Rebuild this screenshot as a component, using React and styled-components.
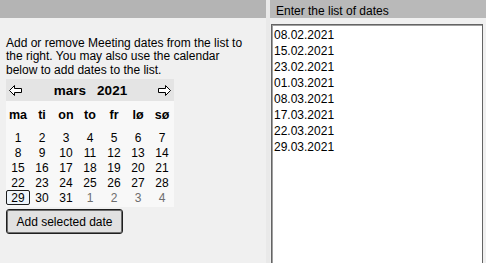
import React from 'react';
import styled, { createGlobalStyle } from 'styled-components';

const GlobalStyle = createGlobalStyle`
  html, body {
    margin: 0;
    padding: 0;
    background: #f0f0f0;
  }
  body {
    font-family: "Liberation Sans", Arial, sans-serif;
    font-size: 12px;
    color: #000;
  }
`;

const WEEKDAYS = ['ma', 'ti', 'on', 'to', 'fr', 'lø', 'sø'];

const DATES = [
  '08.02.2021',
  '15.02.2021',
  '23.02.2021',
  '01.03.2021',
  '08.03.2021',
  '17.03.2021',
  '22.03.2021',
  '29.03.2021',
];

// march 2021 starts on a monday, trailing days from april
const buildDays = () => {
  const days = [];
  for (let d = 1; d <= 31; d++) days.push({ day: d, muted: false });
  for (let d = 1; d <= 4; d++) days.push({ day: d, muted: true });
  return days;
};

const SELECTED_DAY = 29;

const Arrow = ({ direction }) => (
  <svg width="13" height="11" viewBox="0 0 13 11">
    <polygon
      points={
        direction === 'left'
          ? '0.5,5.5 5.5,0.5 5.5,3.5 12.5,3.5 12.5,7.5 5.5,7.5 5.5,10.5'
          : '12.5,5.5 7.5,0.5 7.5,3.5 0.5,3.5 0.5,7.5 7.5,7.5 7.5,10.5'
      }
      fill="#fff"
      stroke="#000"
      strokeWidth="1"
      strokeLinejoin="miter"
    />
  </svg>
);

const App = () => {
  const days = buildDays();

  return (
    <>
      <GlobalStyle />
      <Window>
        <LeftPane>
          <PaneBar />
          <Intro>
            Add or remove Meeting dates from the list to the right. You may also use the
            calendar below to add dates to the list.
          </Intro>
          <Calendar>
            <NavBar>
              <NavButton aria-label="Previous month">
                <Arrow direction="left" />
              </NavButton>
              <MonthTitle>
                <span>mars</span>
                <span>2021</span>
              </MonthTitle>
              <NavButton aria-label="Next month">
                <Arrow direction="right" />
              </NavButton>
            </NavBar>
            <DayGrid>
              {WEEKDAYS.map((w) => (
                <WeekdayCell key={w}>{w}</WeekdayCell>
              ))}
              {days.map((d, i) => (
                <DayCell
                  key={i}
                  $muted={d.muted}
                  $selected={!d.muted && d.day === SELECTED_DAY}
                >
                  {d.day}
                </DayCell>
              ))}
            </DayGrid>
          </Calendar>
          <AddButton>Add selected date</AddButton>
        </LeftPane>
        <Splitter />
        <RightPane>
          <PaneBar $light>
            <PaneTitle>Enter the list of dates</PaneTitle>
          </PaneBar>
          <DateList>
            {DATES.map((d) => (
              <DateRow key={d}>{d}</DateRow>
            ))}
          </DateList>
        </RightPane>
      </Window>
    </>
  );
};

const Window = styled.div`
  width: 486px;
  height: 263px;
  overflow: hidden;
  display: grid;
  grid-template-columns: 266px 4px 1fr;
  background: #f0f0f0;
`;

const LeftPane = styled.div`
  display: flex;
  flex-direction: column;
  align-items: flex-start;
`;

const Splitter = styled.div`
  background: #e9e9e9;
`;

const RightPane = styled.div`
  display: flex;
  flex-direction: column;
  min-height: 0;
`;

const PaneBar = styled.div`
  align-self: stretch;
  height: 18px;
  flex: none;
  background: ${(p) => (p.$light ? '#b9b9b9' : '#b4b4b4')};
  display: flex;
  align-items: center;
`;

const PaneTitle = styled.span`
  padding: 4px 0 0 6px;
  font-size: 12px;
`;

const Intro = styled.p`
  margin: 19px 0 0 6px;
  max-width: 242px;
  font-size: 12px;
  line-height: 13.4px;
`;

const Calendar = styled.div`
  margin: 2px 0 0 6px;
  width: 168px;
  background: #f8f8f8;
  padding-bottom: 2px;
`;

const NavBar = styled.div`
  height: 22px;
  background: #e4e4e4;
  display: flex;
  align-items: center;
  justify-content: space-between;
  padding: 0 3px;
`;

const NavButton = styled.span`
  display: flex;
  width: 13px;
  height: 11px;
  margin-top: 1px;
`;

const MonthTitle = styled.div`
  display: flex;
  gap: 11px;
  font-weight: bold;
  font-size: 13.5px;
  margin-left: 1px;
`;

const DayGrid = styled.div`
  display: grid;
  grid-template-columns: repeat(7, 24px);
  grid-template-rows: 29px repeat(5, 15px);
`;

const WeekdayCell = styled.div`
  display: flex;
  align-items: center;
  justify-content: center;
  font-weight: bold;
  font-size: 12.5px;
  padding-bottom: 1px;
  box-sizing: border-box;
`;

const DayCell = styled.div`
  display: flex;
  align-items: center;
  justify-content: center;
  font-size: 12px;
  box-sizing: border-box;
  color: ${(p) => (p.$muted ? '#6d6d6d' : '#000')};
  border: 1px solid ${(p) => (p.$selected ? '#1c1c1c' : 'transparent')};
  border-radius: 2px;
  background: ${(p) => (p.$selected ? '#eef4fa' : 'transparent')};
`;

const AddButton = styled.button`
  margin: 2px 0 0 6px;
  width: 117px;
  height: 25px;
  padding: 0;
  font-family: "Liberation Sans", Arial, sans-serif;
  font-size: 12px;
  color: #000;
  background: #e1e1e1;
  border: 1px solid #1f1f1f;
  border-radius: 3px;
  box-shadow: inset 0 0 0 1px #6e6e6e;
`;

const DateList = styled.div`
  margin: 6px 3px 0 1px;
  flex: 1;
  background: #fff;
  border: 1px solid #646464;
  border-bottom: none;
  box-shadow: inset 1px 1px 0 #a0a0a0;
  padding: 2px 0 0 2px;
`;

const DateRow = styled.div`
  font-size: 12px;
  line-height: 16px;
`;

export default App;
